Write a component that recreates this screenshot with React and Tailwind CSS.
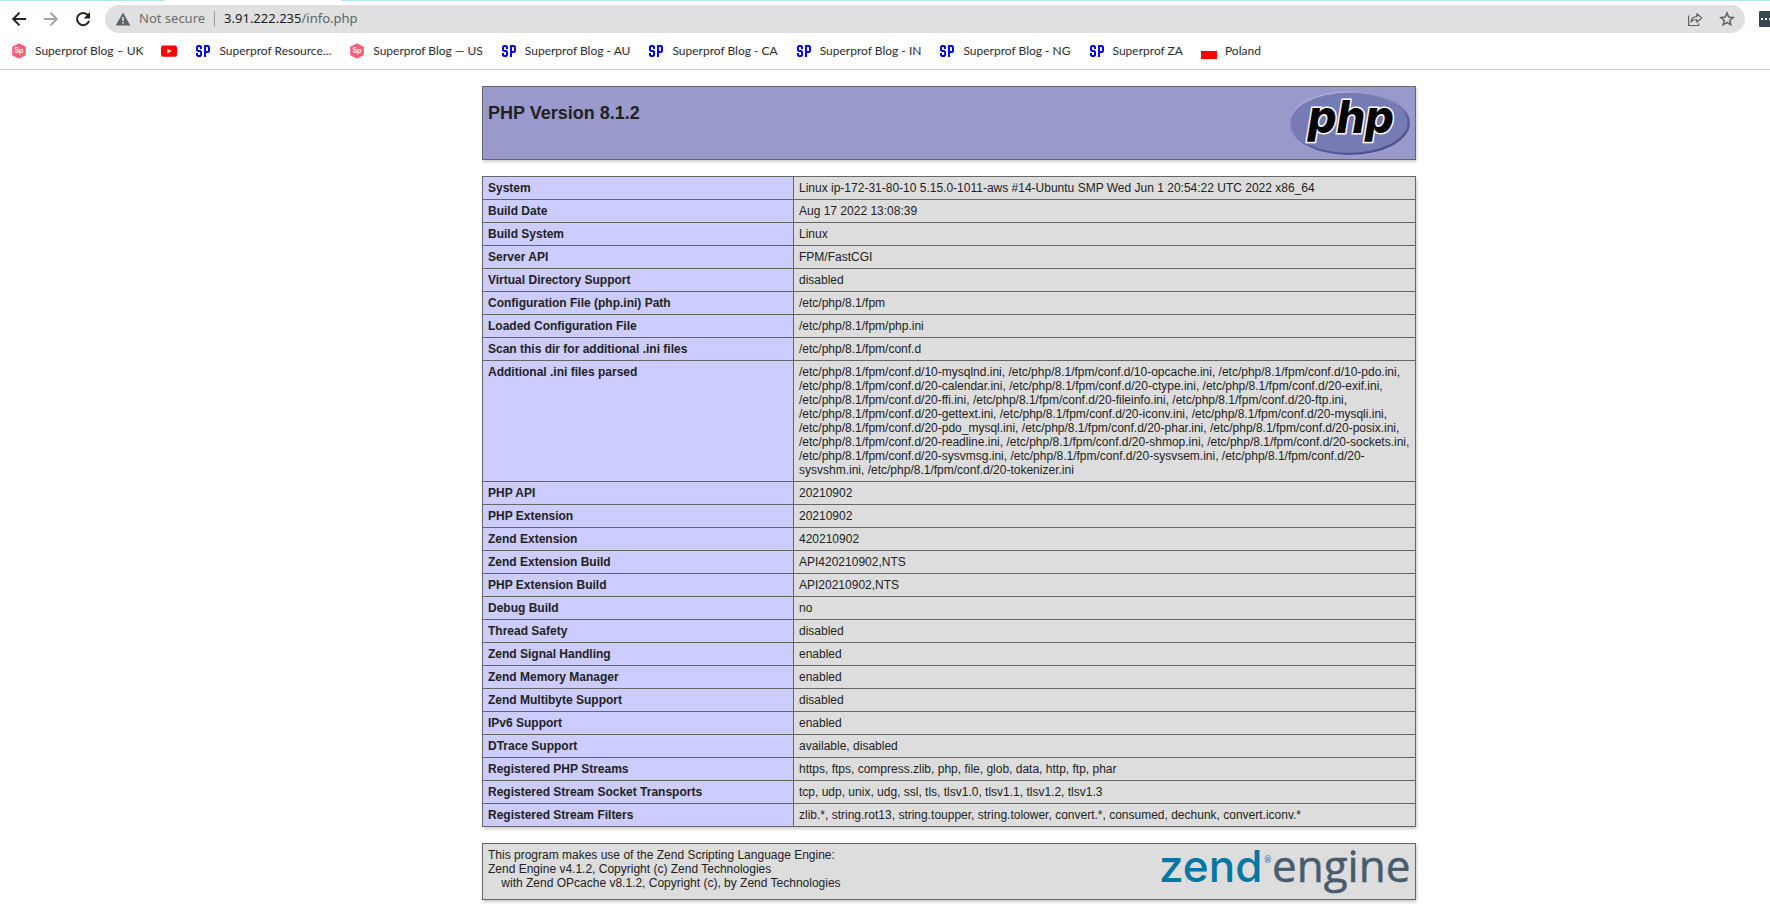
import React from "react";

const ini = [
  "/etc/php/8.1/fpm/conf.d/10-mysqlnd.ini, /etc/php/8.1/fpm/conf.d/10-opcache.ini, /etc/php/8.1/fpm/conf.d/10-pdo.ini,",
  "/etc/php/8.1/fpm/conf.d/20-calendar.ini, /etc/php/8.1/fpm/conf.d/20-ctype.ini, /etc/php/8.1/fpm/conf.d/20-exif.ini,",
  "/etc/php/8.1/fpm/conf.d/20-ffi.ini, /etc/php/8.1/fpm/conf.d/20-fileinfo.ini, /etc/php/8.1/fpm/conf.d/20-ftp.ini,",
  "/etc/php/8.1/fpm/conf.d/20-gettext.ini, /etc/php/8.1/fpm/conf.d/20-iconv.ini, /etc/php/8.1/fpm/conf.d/20-mysqli.ini,",
  "/etc/php/8.1/fpm/conf.d/20-pdo_mysql.ini, /etc/php/8.1/fpm/conf.d/20-phar.ini, /etc/php/8.1/fpm/conf.d/20-posix.ini,",
  "/etc/php/8.1/fpm/conf.d/20-readline.ini, /etc/php/8.1/fpm/conf.d/20-shmop.ini, /etc/php/8.1/fpm/conf.d/20-sockets.ini,",
  "/etc/php/8.1/fpm/conf.d/20-sysvmsg.ini, /etc/php/8.1/fpm/conf.d/20-sysvsem.ini, /etc/php/8.1/fpm/conf.d/20-",
  "sysvshm.ini, /etc/php/8.1/fpm/conf.d/20-tokenizer.ini",
].join("\n");

const rows = [
  ["System", "Linux ip-172-31-80-10 5.15.0-1011-aws #14-Ubuntu SMP Wed Jun 1 20:54:22 UTC 2022 x86_64"],
  ["Build Date", "Aug 17 2022 13:08:39"],
  ["Build System", "Linux"],
  ["Server API", "FPM/FastCGI"],
  ["Virtual Directory Support", "disabled"],
  ["Configuration File (php.ini) Path", "/etc/php/8.1/fpm"],
  ["Loaded Configuration File", "/etc/php/8.1/fpm/php.ini"],
  ["Scan this dir for additional .ini files", "/etc/php/8.1/fpm/conf.d"],
  ["Additional .ini files parsed", ini],
  ["PHP API", "20210902"],
  ["PHP Extension", "20210902"],
  ["Zend Extension", "420210902"],
  ["Zend Extension Build", "API420210902,NTS"],
  ["PHP Extension Build", "API20210902,NTS"],
  ["Debug Build", "no"],
  ["Thread Safety", "disabled"],
  ["Zend Signal Handling", "enabled"],
  ["Zend Memory Manager", "enabled"],
  ["Zend Multibyte Support", "disabled"],
  ["IPv6 Support", "enabled"],
  ["DTrace Support", "available, disabled"],
  ["Registered PHP Streams", "https, ftps, compress.zlib, php, file, glob, data, http, ftp, phar"],
  ["Registered Stream Socket Transports", "tcp, udp, unix, udg, ssl, tls, tlsv1.0, tlsv1.1, tlsv1.2, tlsv1.3"],
  ["Registered Stream Filters", "zlib.*, string.rot13, string.toupper, string.tolower, convert.*, consumed, dechunk, convert.iconv.*"],
];

const HexIcon = () => (
  <svg width="16" height="16" viewBox="0 0 16 16" aria-hidden="true">
    <path d="M8 1.2 13.9 4.4v7.2L8 14.8 2.1 11.6V4.4Z" fill="#ff5c7c" stroke="#ff5c7c" strokeWidth="1.8" strokeLinejoin="round" />
    <text x="8" y="10" textAnchor="middle" fontFamily="Inter, sans-serif" fontSize="7" fontWeight="600" fill="#fff">Sp</text>
  </svg>
);

const YouTubeIcon = () => (
  <svg width="16" height="16" viewBox="0 0 16 16" aria-hidden="true">
    <rect x="0" y="2.4" width="16" height="11.4" rx="2" fill="#f00" />
    <path d="m6.4 5.7 4.2 2.4-4.2 2.4Z" fill="#fff" />
  </svg>
);

const SpIcon = () => (
  <svg width="16" height="16" viewBox="0 0 16 16" aria-hidden="true" fill="none" stroke="#0000ff" strokeWidth="2">
    <path d="M6 6V4L5 3H3L2 4v3l1 1h2l1 1v3l-1 1H3l-1-1v-2" />
    <path d="M10 14V3h3l1 1v4l-1 1h-3" />
  </svg>
);

const FlagIcon = () => (
  <svg width="16" height="16" viewBox="0 0 16 16" aria-hidden="true">
    <rect y="8" width="16" height="8" fill="#f00" />
  </svg>
);

const bookmarks = [
  ["Superprof Blog – UK", HexIcon],
  ["", YouTubeIcon],
  ["Superprof Resource...", SpIcon],
  ["Superprof Blog — US", HexIcon],
  ["Superprof Blog - AU", SpIcon],
  ["Superprof Blog - CA", SpIcon],
  ["Superprof Blog - IN", SpIcon],
  ["Superprof Blog - NG", SpIcon],
  ["Superprof ZA", SpIcon],
  ["Poland", FlagIcon],
];

function Toolbar() {
  return (
    <div className="flex h-9 items-center">
      <div className="flex shrink-0 gap-4 pl-[11px]">
        <button aria-label="Back">
          <svg width="16" height="16" viewBox="0 0 16 16" fill="none" stroke="#202124" strokeWidth="2">
            <path d="M15 8H2.5M8.5 1.6 2.2 8l6.3 6.4" />
          </svg>
        </button>
        <button aria-label="Forward">
          <svg width="16" height="16" viewBox="0 0 16 16" fill="none" stroke="#a0a2a5" strokeWidth="2">
            <path d="M1 8h12.5M7.5 1.6 13.8 8l-6.3 6.4" />
          </svg>
        </button>
        <button aria-label="Reload">
          <svg width="16" height="16" viewBox="0 0 16 16" fill="none">
            <path d="M12.9 4.2A6.1 6.1 0 1 0 14 9.8" stroke="#202124" strokeWidth="2" />
            <path d="M15 1v6.4H8.6Z" fill="#202124" />
          </svg>
        </button>
      </div>
      <div className="ml-[14px] flex h-7 grow items-center rounded-full bg-[#e0e0e0] px-[10px] text-[13px]">
        <svg width="16" height="16" viewBox="0 0 16 16" aria-hidden="true">
          <path d="M8 1.5 15.3 14.5H.7Z" fill="#5f6368" />
          <path d="M7.2 6h1.6v4H7.2zM7.2 11h1.6v1.7H7.2z" fill="#e0e0e0" />
        </svg>
        <span className="ml-2 text-[#6b6e72]">Not secure</span>
        <span className="mx-[9px] h-4 w-px bg-[#9a9c9f]" />
        <label className="text-[#202124]" htmlFor="address">3.91.222.235</label>
        <input id="address" type="text" defaultValue="/info.php" className="min-w-0 grow bg-transparent text-[#5f6368] outline-none" />
        <div className="flex gap-4">
          <button aria-label="Share">
            <svg width="16" height="16" viewBox="0 0 16 16" fill="none" stroke="#5f6368" strokeWidth="1.2">
              <path d="M1.6 4.5v10h10v-2" />
              <path d="M4 11c.3-3.6 2.4-5.3 5.8-5.4V2.8L14.8 7l-5 4.2V8.5C7.2 8.5 5.3 9.2 4 11Z" strokeLinejoin="round" />
            </svg>
          </button>
          <button aria-label="Bookmark this page">
            <svg width="16" height="16" viewBox="0 0 16 16" fill="none" stroke="#5f6368" strokeWidth="1.5">
              <path d="m8 2 1.7 4.1 4.5.4-3.4 2.9 1 4.4L8 11.5l-3.8 2.3 1-4.4L1.8 6.5l4.5-.4Z" />
            </svg>
          </button>
        </div>
      </div>
      <button aria-label="Extension" className="ml-[14px] flex h-4 w-[11px] shrink-0 items-center gap-[2px] overflow-hidden rounded-l-[1px] bg-[#37474f] pl-[2px]">
        <span className="size-[2px] shrink-0 bg-white" />
        <span className="size-[2px] shrink-0 bg-white" />
        <span className="size-[2px] shrink-0 bg-white" />
      </button>
    </div>
  );
}

function PhpLogo() {
  return (
    <svg width="121" height="64" viewBox="0 0 121 64" role="img" aria-label="PHP logo" className="shrink-0 overflow-visible">
      <defs>
        <linearGradient id="rim" x1="0.2" y1="0" x2="0.8" y2="1">
          <stop offset="0" stopColor="#b5b7dd" />
          <stop offset="0.45" stopColor="#8083bb" />
          <stop offset="0.65" stopColor="#5b5e9f" />
          <stop offset="1" stopColor="#484a8c" />
        </linearGradient>
      </defs>
      <ellipse cx="60.5" cy="32" rx="60.5" ry="32" fill="url(#rim)" />
      <ellipse cx="60" cy="31.8" rx="58.5" ry="30" fill="#777bb3" />
      <text x="62" y="42" textAnchor="middle" fontFamily="Inter, sans-serif" fontSize="45" fontWeight="800" fontStyle="italic" fill="#000" stroke="#fff" strokeWidth="3" paintOrder="stroke">php</text>
    </svg>
  );
}

function ZendLogo() {
  return (
    <svg width="251" height="47" viewBox="0 0 251 47" role="img" aria-label="Zend engine" className="shrink-0 overflow-visible">
      <text x="0" y="34" fontFamily="Inter, sans-serif" fontSize="44" fontWeight="500" fill="#0077a4">zend</text>
      <text x="105" y="15" fontFamily="Lato, sans-serif" fontSize="9" fill="#0077a4">®</text>
      <text x="113" y="34" fontFamily="'Open Sans', sans-serif" fontSize="44" fill="#4a5b6e" stroke="#4a5b6e" strokeWidth="0.5">engine</text>
    </svg>
  );
}

export default function App() {
  return (
    <div className="min-h-screen overflow-x-clip bg-white">
      <header className="border-b border-[#cacaca] font-['Noto_Sans',sans-serif]">
        <div className="flex h-px bg-[#b2e6f1]">
          <div className="ml-[165px] w-44 bg-white" />
        </div>
        <Toolbar />
        <nav aria-label="Bookmarks" className="flex h-8 items-center gap-[18px] pb-1 pl-[11px] font-[Lato,sans-serif] text-[12px] text-[#2b2c2e]">
          {bookmarks.map(([label, Icon], i) => (
            <a key={i} href="#" aria-label={label || "YouTube"} className="flex shrink-0 items-center gap-2 whitespace-nowrap">
              <Icon />
              {label && <span>{label}</span>}
            </a>
          ))}
        </nav>
      </header>
      <main className="flex flex-col items-center gap-4 py-4 pl-32 font-['Liberation_Sans',Arial,sans-serif] text-[12px] leading-[14px] text-[#222]">
        <section className="flex w-[934px] justify-between border border-[#666] bg-[#9999cc] px-[5px] py-1 shadow-[1px_2px_3px_rgba(0,0,0,0.2)]">
          <h1 className="pt-3 text-[18px] leading-5 font-bold">PHP Version 8.1.2</h1>
          <PhpLogo />
        </section>
        <table className="w-[934px] table-fixed border-collapse shadow-[1px_2px_3px_rgba(0,0,0,0.2)]">
          <colgroup>
            <col className="w-[311px]" />
            <col />
          </colgroup>
          <tbody>
            {rows.map(([name, value]) => (
              <tr key={name}>
                <th scope="row" className="border border-[#666] bg-[#ccccff] px-[5px] py-1 text-left align-top font-bold">{name}</th>
                <td className="border border-[#666] bg-[#dddddd] px-[5px] py-1 align-top whitespace-pre-line">{value}</td>
              </tr>
            ))}
          </tbody>
        </table>
        <section className="flex w-[934px] justify-between border border-[#666] bg-[#dddddd] px-[5px] py-1 shadow-[1px_2px_3px_rgba(0,0,0,0.2)]">
          <p>
            This program makes use of the Zend Scripting Language Engine:
            <br />
            Zend Engine v4.1.2, Copyright (c) Zend Technologies
            <br />
            &nbsp;&nbsp;&nbsp;&nbsp;with Zend OPcache v8.1.2, Copyright (c), by Zend Technologies
          </p>
          <ZendLogo />
        </section>
      </main>
    </div>
  );
}
